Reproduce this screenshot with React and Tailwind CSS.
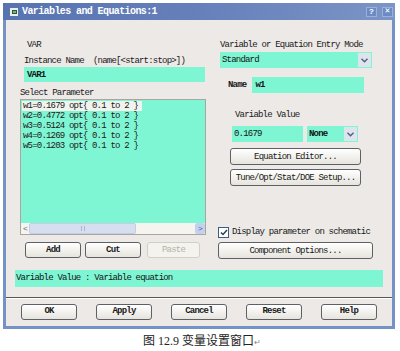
const MONO = { fontFamily: '"Liberation Mono", "DejaVu Sans Mono", monospace' }

const PARAMS = [
  'w1=0.1679 opt{ 0.1 to 2 }',
  'w2=0.4772 opt{ 0.1 to 2 }',
  'w3=0.5124 opt{ 0.1 to 2 }',
  'w4=0.1269 opt{ 0.1 to 2 }',
  'w5=0.1203 opt{ 0.1 to 2 }',
]

function Chevron() {
  return (
    <svg width="7" height="5" viewBox="0 0 7 5">
      <path d="M0.5 0.8 L3.5 3.8 L6.5 0.8" fill="none" stroke="#4d6185" strokeWidth="1.4" />
    </svg>
  )
}

function Btn({ children, className = '', disabled }) {
  return (
    <div
      className={`flex items-center justify-center rounded-[3px] border text-[9px] tracking-[-0.8px] ${
        disabled
          ? 'border-[#d2d0c6] bg-[#f4f3ee] text-[#b4b2a8]'
          : 'border-[#5d6166] bg-gradient-to-b from-white to-[#e6e4dc] font-bold text-[#1a1a1a]'
      } ${className}`}
    >
      {children}
    </div>
  )
}

function Teal({ children, className = '' }) {
  return (
    <div className={`flex items-center bg-[#7ff6d3] text-[9px] tracking-[-0.8px] text-[#141414] ${className}`}>
      {children}
    </div>
  )
}

function Select({ value, className = '', bold }) {
  return (
    <div className={`flex bg-[#7ff6d3] ${className}`}>
      <div className={`flex flex-1 items-center pl-[2px] text-[9px] tracking-[-0.8px] text-[#141414] ${bold ? 'font-bold' : ''}`}>
        {value}
      </div>
      <div className="my-[1px] mr-[1px] flex w-[13px] items-center justify-center bg-[#dfe3ec]">
        <Chevron />
      </div>
    </div>
  )
}

export default function App() {
  return (
    <div className="h-[351px] w-[400px] overflow-hidden bg-white" style={MONO}>
      <div className="ml-[3px] mt-[3px] flex w-[392px] flex-col">
        {/* title bar */}
        <div className="flex h-[17px] items-center bg-gradient-to-r from-[#5874b0] via-[#6580bb] to-[#7c95c6]">
          <div className="ml-[7px] flex h-[8px] w-[8px] items-center justify-center bg-[#e8f0e8]">
            <div className="h-[4px] w-[5px] border border-[#2d5a3a] bg-[#7ab38a]" />
          </div>
          <span className="ml-[4px] text-[10px] font-bold tracking-[-0.6px] text-white">Variables and Equations:1</span>
          <div className="ml-auto mr-[2px] flex gap-[5px]">
            <div className="flex h-[10px] w-[11px] items-center justify-center border border-[#9ab0d8] bg-[#6c8ac4] text-[8px] font-bold text-white">?</div>
            <div className="flex h-[10px] w-[11px] items-center justify-center border border-[#9ab0d8] bg-[#6c8ac4] text-[9px] font-bold text-white">✕</div>
          </div>
        </div>

        {/* body */}
        <div className="flex h-[309px] flex-col border-x-[3px] border-b-[3px] border-[#7392c6] bg-[#ece9e6] text-[#1a1a1a]">
          <div className="flex pt-[20px]">
            {/* left column */}
            <div className="ml-[14px] flex w-[186px] flex-col text-[9px] leading-[10px] tracking-[-0.8px]">
              <div className="h-[10px] pl-[7px]">VAR</div>
              <div className="mt-[6px] h-[10px] whitespace-pre pl-[4px]">Instance Name  (name[&lt;start:stop&gt;])</div>
              <Teal className="ml-[4px] mt-[1px] h-[15px] w-[181px] pl-[3px] font-bold">VAR1</Teal>
              <div className="mt-[6px] h-[10px]">Select Parameter</div>
              <div className="mt-[1px] flex h-[136px] flex-col border border-[#a7a6a0]">
                <div className="flex-1 bg-[#7ff6d3] pl-[1px] pt-[1px]">
                  {PARAMS.map((p, i) => (
                    <div key={p} className="h-[10px] leading-[10px]">
                      <span className={`inline-block pl-[1px] pr-[4px] ${i === 0 ? 'bg-[#f3f3ee]' : ''}`}>{p}</span>
                    </div>
                  ))}
                </div>
                <div className="flex h-[11px] bg-[#f5f4ef]">
                  <div className="flex w-[8px] items-center justify-center text-[8px] text-[#4d6185]">&lt;</div>
                  <div className="flex w-[107px] items-center justify-center rounded-[2px] border border-[#c3cde4] bg-[#d6def0]">
                    <div className="h-[5px] w-[4px] border-x border-[#aab6d4]" />
                  </div>
                  <div className="flex-1" />
                  <div className="flex w-[10px] items-center justify-center rounded-[2px] bg-[#c4d1ee] text-[8px] text-[#4d6185]">&gt;</div>
                </div>
              </div>
              <div className="mt-[7px] flex">
                <Btn className="ml-[5px] h-[16px] w-[56px]">Add</Btn>
                <Btn className="ml-[4px] h-[16px] w-[56px]">Cut</Btn>
                <Btn className="ml-[6px] h-[16px] w-[53px]" disabled>Paste</Btn>
              </div>
            </div>

            {/* right column */}
            <div className="ml-[12px] flex w-[155px] flex-col text-[9px] leading-[10px] tracking-[-0.8px]">
              <div className="h-[10px] pl-[2px]">Variable or Equation Entry Mode</div>
              <Select value="Standard" className="ml-[2px] mt-[2px] h-[16px] w-[152px]" />
              <div className="mt-[9px] flex h-[16px] items-center">
                <span className="ml-[10px] font-bold">Name</span>
                <Teal className="ml-[6px] h-[16px] w-[112px] pl-[3px] font-bold">w1</Teal>
              </div>
              <div className="mt-[17px] h-[10px] pl-[17px]">Variable Value</div>
              <div className="mt-[6px] flex h-[16px]">
                <Teal className="ml-[14px] h-[16px] w-[71px] pl-[2px]">0.1679</Teal>
                <Select value="None" bold className="ml-[4px] h-[16px] w-[51px]" />
              </div>
              <Btn className="ml-[12px] mt-[6px] h-[17px] w-[131px] !font-normal">Equation Editor...</Btn>
              <Btn className="ml-[12px] mt-[4px] h-[17px] w-[131px] !font-normal">Tune/Opt/Stat/DOE Setup...</Btn>
              <div className="mt-[40px] flex h-[12px] items-center">
                <div className="flex h-[11px] w-[11px] items-center justify-center border border-[#3a5d84] bg-white">
                  <svg width="8" height="7" viewBox="0 0 8 7">
                    <path d="M1 3.5 L3 5.5 L7 1" fill="none" stroke="#2a3a4a" strokeWidth="1.4" />
                  </svg>
                </div>
                <span className="ml-[3px]">Display parameter on schematic</span>
              </div>
              <Btn className="mt-[4px] h-[17px] w-[155px] !font-normal">Component Options...</Btn>
            </div>
          </div>

          {/* status */}
          <Teal className="ml-[9px] mt-[11px] h-[17px] w-[368px] pl-[1px]">Variable Value : Variable equation</Teal>

          <div className="mt-[10px] h-[1px] bg-[#55575a]" />
          <div className="h-[1px] bg-white" />

          <div className="ml-[15px] mt-[5px] flex gap-[19px]">
            <Btn className="h-[16px] w-[56px]">OK</Btn>
            <Btn className="h-[16px] w-[56px]">Apply</Btn>
            <Btn className="h-[16px] w-[56px]">Cancel</Btn>
            <Btn className="h-[16px] w-[56px]">Reset</Btn>
            <Btn className="h-[16px] w-[56px]">Help</Btn>
          </div>
        </div>
      </div>

      {/* caption */}
      <div
        className="mt-[4px] pl-[143px] text-[12px] leading-[16px] text-[#222]"
        style={{ fontFamily: '"Liberation Serif", "Noto Sans CJK SC", serif' }}
      >
        图 12.9 变量设置窗口<span className="text-[8px] text-[#888]">↵</span>
      </div>
    </div>
  )
}
